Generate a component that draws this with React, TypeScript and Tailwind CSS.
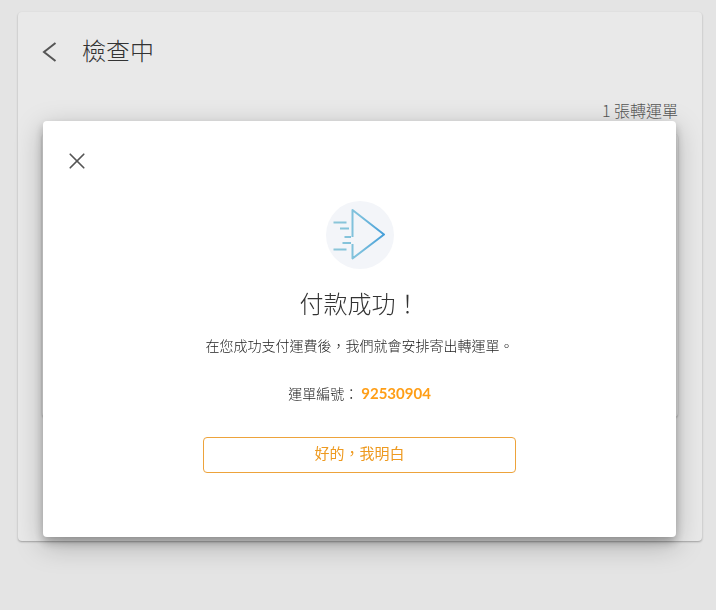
import { X } from 'lucide-react'

const TRACKING_NUMBER = '92530904'

function SendIcon() {
  return (
    <svg
      viewBox="0 0 68 68"
      className="size-[68px]"
      fill="none"
      strokeWidth="2"
      aria-hidden="true"
    >
      <defs>
        <linearGradient
          id="send"
          gradientUnits="userSpaceOnUse"
          x1="8"
          y1="34"
          x2="60"
          y2="34"
        >
          <stop offset="0" stopColor="#8cc6d8" />
          <stop offset="0.5" stopColor="#7cc0dd" />
          <stop offset="1" stopColor="#3f9bd8" />
        </linearGradient>
      </defs>
      <circle cx="34" cy="34" r="34" fill="#f3f5f9" />
      <g stroke="url(#send)" strokeLinejoin="round">
        <path d="M26.500 36V9L58 33.500L26.500 57.500V43" />
        <path d="M7.500 21.500L20.500 21.400M14 27.500L23 27.400M18.500 36L25 35.900M16.500 42L25 41.900M7.500 48.500L20.500 48.400" />
      </g>
    </svg>
  )
}

function PaymentDialog() {
  return (
    <div className="fixed inset-0 pt-[121px] pr-10 pb-[73px] pl-[43px]">
      <section
        role="dialog"
        aria-modal="true"
        aria-labelledby="dialog-title"
        className="flex min-h-[416px] flex-col rounded bg-white px-6 pt-6 shadow-[0_5px_10px_rgba(0,0,0,0.25),0_8px_28px_rgba(0,0,0,0.25)]"
      >
        <button
          type="button"
          aria-label="關閉"
          className="flex size-8 cursor-pointer items-center text-[#555]"
        >
          <X className="size-5 scale-135" strokeWidth={1.5} />
        </button>

        <div className="mx-auto mt-6 flex w-full max-w-[313px] flex-col items-center text-[#333]">
          <SendIcon />
          <h2 id="dialog-title" className="mt-4 text-2xl leading-9 font-light">
            付款成功！
          </h2>
          <p className="mt-[14px] text-sm leading-5 font-light whitespace-nowrap text-[#222]">
            在您成功支付運費後，我們就會安排寄出轉運單。
          </p>
          <p className="mt-7 text-sm leading-5 font-light text-[#222]">
            運單編號：{' '}
            <span className="font-[Lato,sans-serif] text-[15px] font-bold text-[#ff9e16]">
              {TRACKING_NUMBER}
            </span>
          </p>
          <button
            type="button"
            className="mt-[34px] h-9 w-full cursor-pointer rounded border border-[#eda33b] pb-1 text-[15px] text-[#ee9a20]"
          >
            好的，我明白
          </button>
        </div>
      </section>
    </div>
  )
}

export default function App() {
  return (
    <div className="min-h-screen bg-[#e4e4e4] pt-3 pr-[14px] pl-[18px] font-['Noto_Sans_CJK_TC',sans-serif]">
      <main className="min-h-[529px] rounded bg-[#e9e9e9] px-6 pt-5 shadow-[0_1px_2px_rgba(0,0,0,0.3)]">
        <header className="flex items-center gap-6">
          <button
            type="button"
            aria-label="返回"
            className="flex cursor-pointer items-center pt-1 text-[#555]"
          >
            <svg
              viewBox="0 0 16 20"
              className="h-5 w-4"
              fill="none"
              stroke="currentColor"
              strokeWidth="2"
            >
              <path d="M13.500 1L2 10L13.500 19" />
            </svg>
          </button>
          <h1 className="text-2xl leading-9 font-light text-[#333]">檢查中</h1>
        </header>
        <p className="mt-[30px] text-right text-base leading-6 font-light text-[#555]">
          1 張轉運單
        </p>
        <div className="mt-3 h-[283px] rounded shadow-[0_1px_2px_rgba(0,0,0,0.25)]" />
      </main>
      <PaymentDialog />
    </div>
  )
}
